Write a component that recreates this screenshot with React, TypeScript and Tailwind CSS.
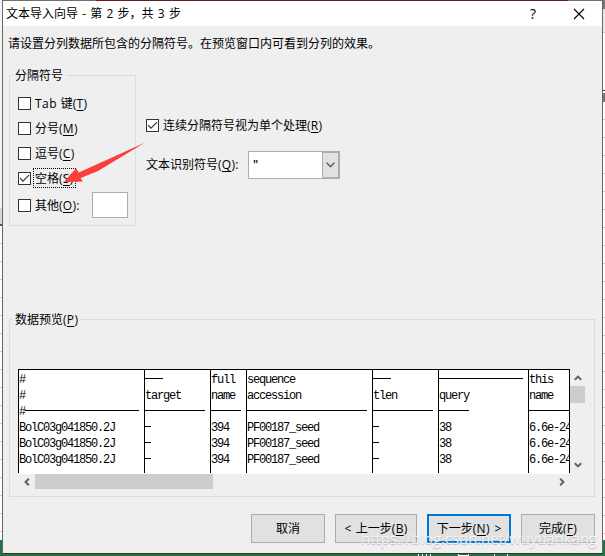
import React from "react";

const Key = ({ k }: { k: string }) => (
  <span className="tracking-[0.3px]">
    (<span className="underline decoration-1 underline-offset-2">{k}</span>)
  </span>
);

const Box = ({ checked }: { checked?: boolean }) => (
  <span className="flex size-[13px] shrink-0 items-center justify-center border border-[#333] bg-white">
    {checked && (
      <svg width="11" height="11" viewBox="0 0 11 11" fill="none" stroke="#333" strokeWidth="1.2">
        <path d="M1 5.2 4 8.2 10 2.2" />
      </svg>
    )}
  </span>
);

const Chevron = ({ turn = "" }: { turn?: string }) => (
  <svg width="8" height="8" viewBox="0 0 8 8" fill="none" stroke="#606060" strokeWidth="2" className={turn}>
    <path d="M0.8 5.8 4 2.6 7.2 5.8" />
  </svg>
);

type Col = { w: string; top?: string; rule1?: string; mid?: string; rule3: string; hash?: boolean; value: string };

const columns: Col[] = [
  { w: "w-[126px]", top: "#", mid: "#", hash: true, rule3: "w-[114px]", value: "BolC03g041850.2J" },
  { w: "w-[66px]", rule1: "w-[18px]", mid: "target", rule3: "w-[60px]", value: "-" },
  { w: "w-[36px]", top: "full", mid: "name", rule3: "w-[30px]", value: "394" },
  { w: "w-[126px]", top: "sequence", mid: "accession", rule3: "w-[120px]", value: "PF00187_seed" },
  { w: "w-[66px]", rule1: "w-[18px]", mid: "tlen", rule3: "w-[60px]", value: "-" },
  { w: "w-[90px]", rule1: "w-[84px]", mid: "query", rule3: "w-[30px]", value: "38" },
  { w: "w-[41px]", top: "this", mid: "name", rule3: "w-[41px]", value: "6.6e-24" },
];

const Preview = () => (
  <div className="flex h-[105px] w-[552px] overflow-hidden border-t border-black bg-white font-['Liberation_Mono',monospace] text-[12px] leading-4 tracking-[-1.2px]">
    {columns.map((c, i) => (
      <div key={i} className={`h-[103px] shrink-0 overflow-hidden whitespace-nowrap border-l border-black pt-[2px] ${c.w}`}>
        <div className="h-4">
          {c.rule1 ? <div className={`h-[7px] border-b border-black ${c.rule1}`} /> : c.top}
        </div>
        <div className="h-4">{c.mid}</div>
        <div className="flex h-4">
          {c.hash && <span className="w-[6px] shrink-0">#</span>}
          <div className={`h-[7px] shrink-0 border-b border-black ${c.rule3}`} />
        </div>
        {[0, 1, 2].map((r) => (
          <div key={r} className="h-4">
            {c.value === "-" ? <div className="h-[7px] w-[6px] border-b border-black" /> : c.value}
          </div>
        ))}
      </div>
    ))}
    <div className="h-[103px] w-px shrink-0 bg-black" />
  </div>
);

const gridLines = "bg-[repeating-linear-gradient(to_bottom,#fff_0px,#fff_17px,#d0d0d0_17px,#d0d0d0_18px)]";

export default function App() {
  return (
    <div className="relative flex h-[556px] w-[605px] flex-col overflow-hidden bg-[#217346] font-['Open_Sans','Noto_Sans_CJK_SC',sans-serif] text-[12px] leading-4 text-black">
      <div className="flex h-[554px]">
        <div className="flex w-[2px] flex-col">
          <div className="h-[208px] bg-[#f4f4f4]" />
          <div className="h-[7px] bg-[#d8d8d8]" />
          <div className="h-[11px] border-b-2 border-[#217346] bg-[#d8d8d8]" />
          <div className={`h-[314px] ${gridLines}`} />
        </div>

        <div className="flex h-[554px] w-[601px] flex-col border border-t-0 border-[#666] border-b-[#333] bg-[#efefef]">
          <div className="flex h-px">
            <span className="w-[93px] bg-[#707070]" />
            <span className="w-[472px] bg-[#6b1c1f]" />
            <span className="flex-1 bg-[#707070]" />
          </div>
          <div className="flex h-[25px] items-center bg-white pl-[3px]">
            <span className="w-[500px] whitespace-pre [word-spacing:1.1px]">文本导入向导 - 第 2 步，共 3 步</span>
            <span className="ml-[24px] w-[13px] text-[14px] font-medium">?</span>
            <svg className="ml-[30px]" width="12" height="12" viewBox="0 0 12 12" stroke="#000" strokeWidth="1.1">
              <path d="M1 1 11 11M11 1 1 11" />
            </svg>
          </div>

          <div className="h-[49px] whitespace-nowrap pl-[5px] pt-[10px]">请设置分列数据所包含的分隔符号。在预览窗口内可看到分列的效果。</div>

          <div className="flex h-[244px] items-start pl-[6px]">
            <div className="flex h-[151px] w-[127px] flex-col border border-[#dcdcdc] pl-[8px]">
              <div className="-ml-[5px] -mt-[9px] h-[18px] w-[53px] bg-[#efefef] pl-[2px] leading-[18px]">分隔符号</div>
              <div className="mt-[9px] flex h-[19px] items-center gap-1"><Box /><span><span className="tracking-[0.5px]">Tab </span>键<Key k="T" /></span></div>
              <div className="mt-[6px] flex h-[19px] items-center gap-1"><Box /><span>分号<Key k="M" /></span></div>
              <div className="mt-[6px] flex h-[19px] items-center gap-1"><Box /><span>逗号<Key k="C" /></span></div>
              <div className="mt-[5px] flex h-[20px] items-center gap-[2px]">
                <Box checked />
                <span className="h-5 w-[43px] overflow-hidden whitespace-nowrap border border-dotted border-black pl-px leading-[20px]">空格<Key k="S" /></span>
              </div>
              <div className="mt-[4px] flex h-[26px] items-center">
                <Box />
                <span className="ml-1 w-[57px] pt-[2px]">其他<Key k="O" />:</span>
                <span className="h-[26px] w-[36px] border border-[#abadb3] bg-white" />
              </div>
            </div>
            <div className="ml-[10px] flex flex-col pt-[42px]">
              <div className="flex h-[17px] items-center gap-1"><Box checked /><span>连续分隔符号视为单个处理<Key k="R" /></span></div>
              <div className="mt-[17px] flex h-[28px] items-center">
                <span className="w-[102px]">文本识别符号<Key k="Q" />:</span>
                <div className="flex h-[28px] w-[92px] border border-[#abadb3] bg-white">
                  <span className="w-[73px] pl-1 pt-[5px] font-semibold">"</span>
                  <span className="flex w-[17px] items-center justify-center border border-[#adadad] bg-[#e1e1e1]">
                    <svg width="9" height="6" viewBox="0 0 9 6" fill="none" stroke="#444" strokeWidth="1.2"><path d="M.5.7 4.5 4.7 8.5.7" /></svg>
                  </span>
                </div>
              </div>
            </div>
          </div>

          <div className="ml-[6px] flex h-[178px] w-[586px] flex-col border border-[#dcdcdc] pl-[8px]">
            <div className="-ml-[5px] -mt-[9px] h-[18px] w-[67px] bg-[#efefef] pl-[2px] leading-[18px]">数据预览<Key k="P" /></div>
            <div className="mt-[40px] flex">
              <Preview />
              <div className="flex h-[104px] w-[15px] flex-col items-center">
                <span className="flex h-[17px] items-center"><Chevron /></span>
                <span className="h-[17px] w-[15px] bg-[#cdcdcd]" />
                <span className="mt-auto flex h-[17px] items-center"><Chevron turn="rotate-180" /></span>
              </div>
            </div>
            <div className="flex h-[15px] w-[552px] items-center">
              <span className="flex w-[17px] justify-center"><Chevron turn="-rotate-90" /></span>
              <span className="h-[15px] w-[178px] bg-[#cdcdcd]" />
              <span className="ml-auto flex w-[17px] justify-center"><Chevron turn="rotate-90" /></span>
            </div>
          </div>

          <div className="mt-[17px] flex h-[29px] gap-[10px] pl-[248px] [&>button]:border [&>button]:border-[#adadad] [&>button]:bg-[#e1e1e1]">
            <button className="w-[74px]">取消</button>
            <button className="w-[82px] whitespace-nowrap [word-spacing:1.5px]">&lt; 上一步<Key k="B" /></button>
            <button className="w-[84px] whitespace-nowrap outline-1 -outline-offset-2 outline-[#0078d7] !border-[#0078d7] [word-spacing:1.5px]">下一步<Key k="N" /> &gt;</button>
            <button className="w-[74px]">完成<Key k="F" /></button>
          </div>
        </div>

        <div className="flex w-[2px] flex-col">
          <div className="h-[9px] bg-[#777]" />
          <div className="h-[24px] border-b border-[#ccc] bg-[#e8e8e8]" />
          <div className="h-[58px] border-b border-[#333] bg-white" />
          <div className="h-[11px] border-t-2 border-white bg-[#777]" />
          <div className={`h-[438px] ${gridLines}`} />
          <div className="h-[14px] bg-[#217346]" />
        </div>
      </div>

      <div className="flex h-[2px] pl-[418px]">
        <span className="h-[2px] w-[14px] bg-[repeating-linear-gradient(to_right,#fff_0px,#fff_1px,#217346_1px,#217346_4px)]" />
        <span className="ml-[26px] w-[11px] border-x border-b border-white" />
        <span className="ml-[25px] w-px bg-white" />
        <span className="ml-[12px] w-px bg-white" />
      </div>

      <svg className="absolute left-[60px] top-[138px]" width="90" height="50" viewBox="60 138 90 50">
        <path d="M144.7 142.7 78.8 172.5 76 168.3 64 182 82.8 181.6 80.6 178 98 171Z" fill="#fc3d39" />
      </svg>
      <div className="absolute left-[361px] top-[528px] whitespace-nowrap text-[15px] leading-5 tracking-[-0.1px] text-white/80 [text-shadow:0_1px_1px_#8888]">
        https://blog.csdn.net/wuyuankang
      </div>
    </div>
  );
}
